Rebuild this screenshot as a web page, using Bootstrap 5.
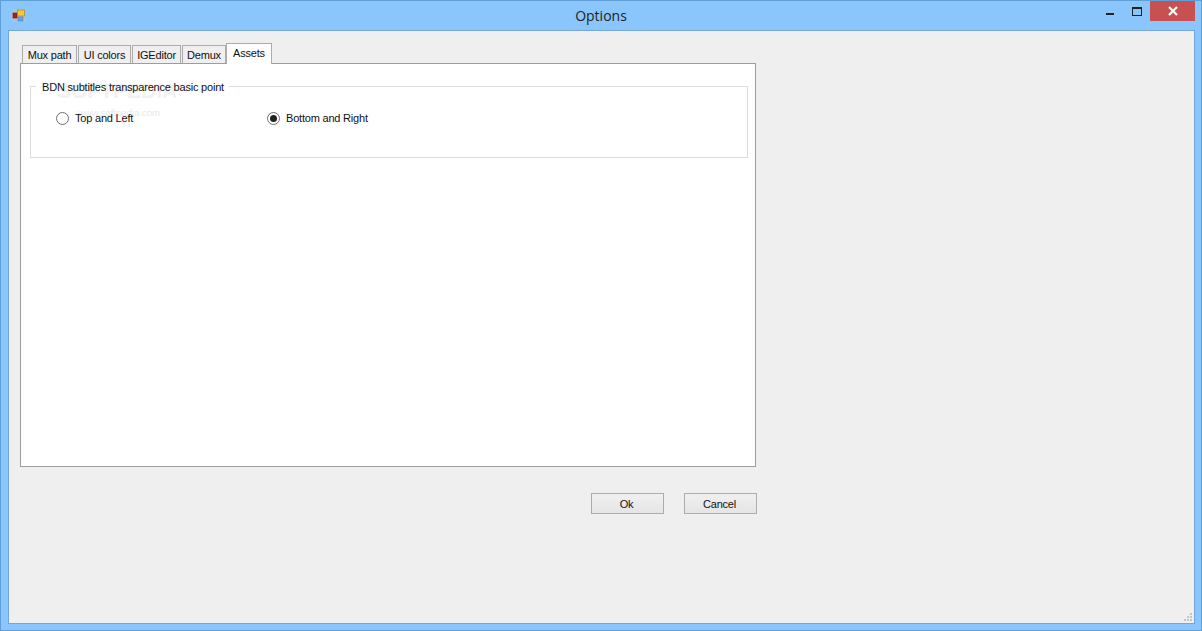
<!DOCTYPE html>
<html lang="en">
<head>
<meta charset="utf-8">
<title>Options</title>
<link href="https://cdn.jsdelivr.net/npm/bootstrap@5.3.0/dist/css/bootstrap.min.css" rel="stylesheet">
<style>
html,body{margin:0;height:631px;overflow:hidden;background:#8ac6fb;}
body{font-family:"Liberation Sans",Arial,sans-serif;font-size:11px;letter-spacing:-.2px;color:#111;}
.win-frame{width:1202px;height:631px;border:1px solid #5f9fd6;background:#8ac6fb;padding:0 7px 7px 7px;}
.title-row{height:29px;position:relative;}
.app-icon{position:absolute;left:4px;top:8px;}
.win-title{font-family:"Open Sans","Noto Sans",sans-serif;font-size:14px;letter-spacing:0;color:#222;padding-top:5px;line-height:20px;text-align:center;width:100%;padding-left:0;}
.ctrl-min{position:absolute;left:1098px;top:12px;width:8px;height:2px;background:#222;}
.ctrl-max{position:absolute;left:1124px;top:6px;width:10px;height:9px;border:1px solid #222;border-top-width:2px;}
.ctrl-close{position:absolute;left:1142px;top:0;width:45px;height:20px;background:#c75050;display:flex;align-items:center;justify-content:center;}
.client{height:594px;width:1187px;background:#efefef;border:1px solid #74a7d6;position:relative;padding:12px 0 0 11px;}
.tab-strip{height:20px;padding-left:2px;align-items:flex-end;display:flex;position:relative;z-index:2;}
.tab-item{height:18px;margin-right:1px;border:1px solid #acacac;border-bottom:0;background:#efefef;line-height:18px;text-align:center;white-space:nowrap;}
.tab-on{height:21px;margin-right:0;margin-left:-1px;margin-bottom:-1px;background:#fff;line-height:18px;padding-bottom:3px;}
.panel-box{width:736px;height:404px;background:#fff;border:1px solid #9d9d9d;padding:22px 7px 0 9px;position:relative;}
.group-box{width:718px;height:72px;border:1px solid #dcdcdc;position:relative;}
.group-title{position:absolute;left:7px;top:-6px;padding:0 5px 0 4px;line-height:13px;white-space:nowrap;z-index:1;}
.radio-row{padding-top:20px;height:42px;}
.radio-opt{display:flex;align-items:center;line-height:14px;position:relative;z-index:1;}
.radio-first{width:236px;padding-left:25px;}
.radio-ring{width:13px;height:13px;border:1px solid #707070;border-radius:50%;background:#fff;margin-right:6px;display:flex;align-items:center;justify-content:center;flex:none;}
.radio-dot{width:7px;height:7px;border-radius:50%;background:#222;}
.wm-big{position:absolute;left:26px;top:-8px;font-size:21px;font-weight:700;letter-spacing:0;color:#f1f1f1;line-height:24px;white-space:nowrap;}
.wm-small{position:absolute;left:47px;top:20px;font-size:9.5px;letter-spacing:0;color:#e9e9e9;line-height:12px;white-space:nowrap;}
.title-gap{position:absolute;left:5px;top:-1px;width:193px;height:1px;background:#fff;}
.action-row{width:737px;padding-top:26px;justify-content:flex-end;gap:20px;}
.dlg-btn{width:73px;height:21px;border:1px solid #acacac;background:linear-gradient(#f0f0f0,#e5e5e5);font-size:11px;letter-spacing:-.2px;line-height:20px;padding:0 2px 0 0;color:#111;border-radius:0;font-family:inherit;}
.grip{position:absolute;right:2px;bottom:2px;}
</style>
</head>
<body>
<div class="win-frame">
  <div class="title-row">
    <svg class="app-icon" width="14" height="14" viewBox="0 0 14 14">
      <rect x="0.5" y="0.5" width="13" height="12" fill="#c9c4b4" opacity=".55"/>
      <rect x="1" y="4" width="4" height="5" fill="#b81a14" stroke="#7d110d" stroke-width=".6"/>
      <rect x="5.5" y="1" width="7" height="6" fill="#f5c936" stroke="#a8842a" stroke-width=".7"/>
      <rect x="6" y="8" width="5" height="4" fill="#6f9fe0" stroke="#5079b8" stroke-width=".5"/>
    </svg>
    <div class="win-title">Options</div>
    <div class="ctrl-min"></div>
    <div class="ctrl-max"></div>
    <div class="ctrl-close">
      <svg width="12" height="10" viewBox="0 0 12 10"><path d="M2 1 L10 9 M10 1 L2 9" stroke="#fff" stroke-width="2.2" fill="none"/></svg>
    </div>
  </div>
  <div class="client">
    <div class="tab-strip">
      <div class="tab-item" style="width:55px">Mux path</div>
      <div class="tab-item" style="width:53px">UI colors</div>
      <div class="tab-item" style="width:49px">IGEditor</div>
      <div class="tab-item" style="width:44px">Demux</div>
      <div class="tab-item tab-on" style="width:46px">Assets</div>
    </div>
    <div class="panel-box">
      <div class="group-box">
        <div class="title-gap"></div>
        <div class="wm-big">SOFTPEDIA</div>
        <div class="wm-small">www.softpedia.com</div>
        <div class="group-title">BDN subtitles transparence basic point</div>
        <div class="radio-row d-flex">
          <label class="radio-opt radio-first"><span class="radio-ring"></span>Top and Left</label>
          <label class="radio-opt"><span class="radio-ring"><span class="radio-dot"></span></span>Bottom and Right</label>
        </div>
      </div>
    </div>
    <div class="action-row d-flex">
      <button type="button" class="btn dlg-btn">Ok</button>
      <button type="button" class="btn dlg-btn">Cancel</button>
    </div>
    <svg class="grip" width="8" height="8" viewBox="1 0 8 8" fill="#c4c4c4">
      <rect x="7" y="0" width="2" height="2"/><rect x="4" y="3" width="2" height="2"/><rect x="7" y="3" width="2" height="2"/><rect x="1" y="6" width="2" height="2"/><rect x="4" y="6" width="2" height="2"/><rect x="7" y="6" width="2" height="2"/>
    </svg>
  </div>
</div>
<script src="https://cdn.jsdelivr.net/npm/bootstrap@5.3.0/dist/js/bootstrap.bundle.min.js"></script>
</body>
</html>
